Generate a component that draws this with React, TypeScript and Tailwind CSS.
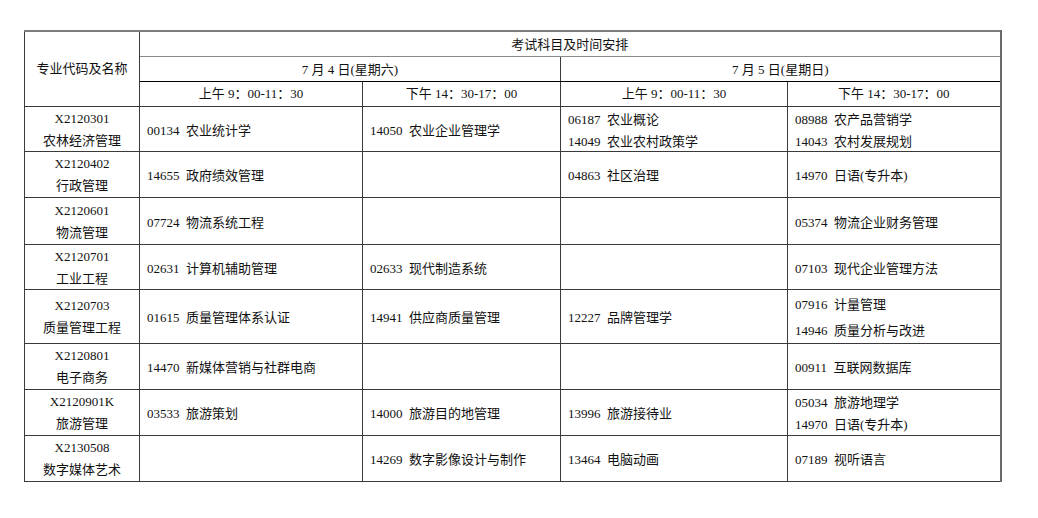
type Row = {
  code: string
  name: string
  cells: string[][]
  h: string
  wide?: boolean
}

const rows: Row[] = [
  { code: "X2120301", name: "农林经济管理", h: "h-[45px]", cells: [["00134  农业统计学"], ["14050  农业企业管理学"], ["06187  农业概论", "14049  农业农村政策学"], ["08988  农产品营销学", "14043  农村发展规划"]] },
  { code: "X2120402", name: "行政管理", h: "h-[46px]", cells: [["14655  政府绩效管理"], [], ["04863  社区治理"], ["14970  日语(专升本)"]] },
  { code: "X2120601", name: "物流管理", h: "h-[47px]", cells: [["07724  物流系统工程"], [], [], ["05374  物流企业财务管理"]] },
  { code: "X2120701", name: "工业工程", h: "h-[45px]", cells: [["02631  计算机辅助管理"], ["02633  现代制造系统"], [], ["07103  现代企业管理方法"]] },
  { code: "X2120703", name: "质量管理工程", h: "h-[54px]", wide: true, cells: [["01615  质量管理体系认证"], ["14941  供应商质量管理"], ["12227  品牌管理学"], ["07916  计量管理", "14946  质量分析与改进"]] },
  { code: "X2120801", name: "电子商务", h: "h-[46px]", cells: [["14470  新媒体营销与社群电商"], [], [], ["00911  互联网数据库"]] },
  { code: "X2120901K", name: "旅游管理", h: "h-[46px]", cells: [["03533  旅游策划"], ["14000  旅游目的地管理"], ["13996  旅游接待业"], ["05034  旅游地理学", "14970  日语(专升本)"]] },
  { code: "X2130508", name: "数字媒体艺术", h: "h-[46px]", cells: [[], ["14269  数字影像设计与制作"], ["13464  电脑动画"], ["07189  视听语言"]] },
]

const cell = "border border-[#3a3a3a] p-0"

export default function App() {
  return (
    <div className="min-h-[518px] w-[1038px] bg-white pt-[30px] pl-[24px] text-[13px] text-[#111] [font-family:'Liberation_Serif','Noto_Sans_CJK_SC',serif]">
      <table className="table-fixed border-collapse border-t-2 border-r-2 border-t-[#7d7d7d] border-r-[#6a6a6a] w-[976px]">
        <colgroup>
          <col className="w-[115px]" />
          <col className="w-[223px]" />
          <col className="w-[198px]" />
          <col className="w-[227px]" />
          <col className="w-[213px]" />
        </colgroup>
        <thead>
          <tr className="h-[25px]">
            <th rowSpan={3} className={`${cell} text-center font-normal leading-[20px]`}>专业代码及名称</th>
            <th colSpan={4} className={`${cell} border-b-[#8a8a8a] text-center font-normal leading-[20px]`}>
              <div className="translate-y-[1px]">考试科目及时间安排</div>
            </th>
          </tr>
          <tr className="h-[25px]">
            <th colSpan={2} className={`${cell} border-b-black text-center font-normal leading-[20px]`}>
              <div className="translate-y-[1px]">7 月 4 日(星期六)</div>
            </th>
            <th colSpan={2} className={`${cell} border-b-black text-center font-normal leading-[20px]`}>
              <div className="translate-y-[1px]">7 月 5 日(星期日)</div>
            </th>
          </tr>
          <tr className="h-[25px]">
            <th className={`${cell} text-center font-normal leading-[20px]`}>上午 9：00-11：30</th>
            <th className={`${cell} text-center font-normal leading-[20px]`}>下午 14：30-17：00</th>
            <th className={`${cell} text-center font-normal leading-[20px]`}>上午 9：00-11：30</th>
            <th className={`${cell} text-center font-normal leading-[20px]`}>下午 14：30-17：00</th>
          </tr>
        </thead>
        <tbody>
          {rows.map((r) => (
            <tr key={r.code} className={r.h}>
              <td className={`${cell} text-center align-middle leading-[22px]`}>
                <div className="translate-y-[1px]">
                  <div>{r.code}</div>
                  <div>{r.name}</div>
                </div>
              </td>
              {r.cells.map((c, i) => (
                <td key={i} className={`${cell} pl-[7px] align-middle whitespace-pre ${r.wide && c.length > 1 ? "leading-[26px]" : "leading-[22px]"}`}>
                  <div className="translate-y-[2px]">
                    {c.map((t) => (
                      <div key={t}>{t}</div>
                    ))}
                  </div>
                </td>
              ))}
            </tr>
          ))}
        </tbody>
      </table>
    </div>
  )
}
